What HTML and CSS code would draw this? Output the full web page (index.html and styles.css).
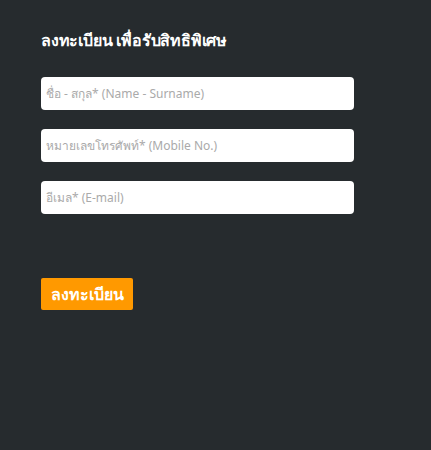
FILE: index.html
```html
<!DOCTYPE html>
<html lang="th">
  <head>
    <meta charset="UTF-8" />
    <meta name="viewport" content="width=device-width, initial-scale=1.0" />
    <title>ลงทะเบียน</title>
    <link rel="stylesheet" href="styles.css">
  </head>
  <body>
    <section class="register">
      <h1 class="register__title">ลงทะเบียน เพื่อรับสิทธิพิเศษ</h1>
      <form class="register__form">
        <input class="register__input" type="text" placeholder="ชื่อ - สกุล* (Name - Surname)" />
        <input class="register__input" type="tel" placeholder="หมายเลขโทรศัพท์* (Mobile No.)" />
        <input class="register__input" type="email" placeholder="อีเมล* (E-mail)" />
        <button class="register__button" type="submit">ลงทะเบียน</button>
      </form>
    </section>
  </body>
</html>
```

FILE: styles.css
```css
* {
  margin: 0;
  padding: 0;
  box-sizing: border-box;
}
html,
body {
  height: 100%;
}
body {
  background-color: #262b2e;
  font-family: "Noto Sans", "DejaVu Sans", sans-serif;
}
.register {
  padding: 28px 0 0 41px;
}
.register__title {
  font-size: 16px;
  font-weight: 700;
  color: #ffffff;
  line-height: 24px;
  letter-spacing: -0.2px;
}
.register__form {
  display: flex;
  flex-direction: column;
  align-items: flex-start;
  gap: 19px;
  margin-top: 25px;
}
.register__input {
  width: 313px;
  height: 33px;
  border: none;
  outline: none;
  border-radius: 4px;
  background-color: #ffffff;
  padding: 0 5px;
  font-family: inherit;
  font-size: 12px;
  color: #333;
}
.register__input::placeholder {
  color: #aaaaaa;
}
.register__button {
  margin-top: 45px;
  width: 92px;
  height: 32px;
  border: none;
  border-radius: 2px;
  background-color: #ff9900;
  color: #ffffff;
  font-family: inherit;
  font-size: 16px;
  font-weight: 700;
  cursor: pointer;
}
```
